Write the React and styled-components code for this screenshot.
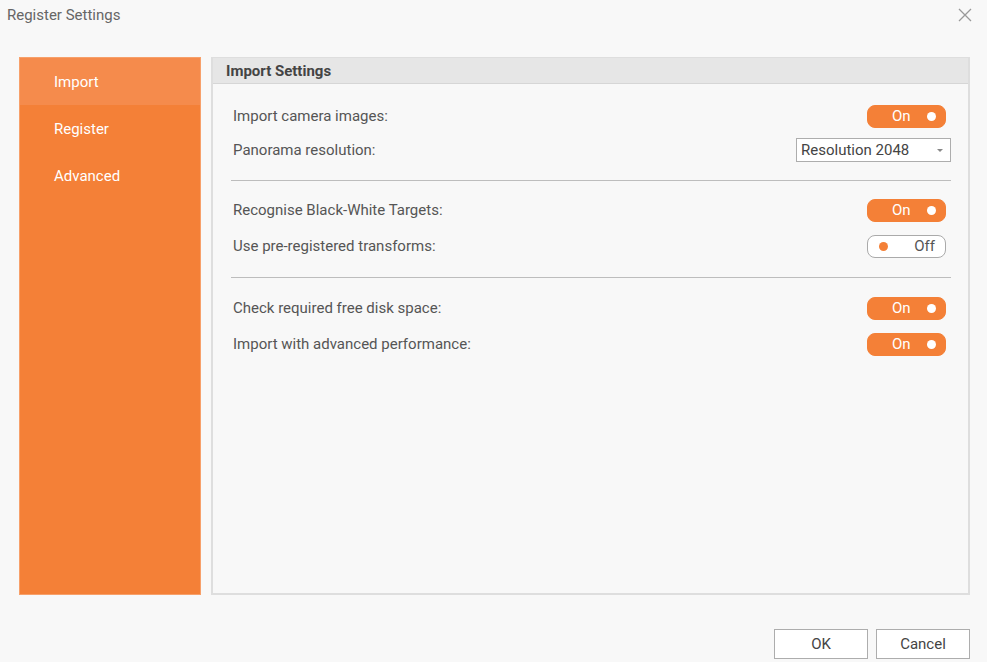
import React, { useState } from 'react';
import styled, { createGlobalStyle } from 'styled-components';

const GlobalStyle = createGlobalStyle`
  html, body {
    margin: 0;
    padding: 0;
    background: #f8f8f8;
    font-family: Roboto, "Liberation Sans", sans-serif;
  }
`;

const Dialog = styled.div`
  width: 987px;
  height: 662px;
  display: flex;
  flex-direction: column;
  background: #f8f8f8;
  box-sizing: border-box;
`;

const TitleBar = styled.div`
  height: 29px;
  display: flex;
  align-items: center;
  justify-content: space-between;
  padding: 0 14px 0 7px;
`;

const Title = styled.span`
  font-size: 15px;
  color: #666;
`;

const CloseButton = styled.button`
  border: none;
  background: none;
  padding: 0;
  width: 16px;
  height: 16px;
  display: flex;
  align-items: center;
  justify-content: center;
  cursor: pointer;
`;

const Body = styled.div`
  display: flex;
  gap: 10px;
  padding: 28px 17px 0 19px;
  height: 538px;
`;

const Sidebar = styled.nav`
  width: 182px;
  background: #f48037;
  border: 1px solid #f7a06a;
  box-sizing: border-box;
  display: flex;
  flex-direction: column;
`;

const NavItem = styled.div`
  height: 47px;
  display: flex;
  align-items: center;
  padding-left: 34px;
  color: #fff;
  font-size: 15px;
  background: ${(p) => (p.$active ? '#f58b4c' : 'transparent')};
  cursor: pointer;
`;

const Panel = styled.section`
  flex: 1;
  border: 2px solid #dedede;
  border-top-width: 1px;
  box-sizing: border-box;
  display: flex;
  flex-direction: column;
`;

const PanelHeader = styled.div`
  height: 25px;
  background: #e6e6e6;
  border-bottom: 1px solid #d6d6d6;
  display: flex;
  align-items: center;
  padding-left: 13px;
  font-size: 15px;
  font-weight: 700;
  color: #444;
`;

const PanelContent = styled.div`
  padding: 20px 17px 0 18px;
  display: flex;
  flex-direction: column;
`;

const Group = styled.div`
  display: flex;
  flex-direction: column;
  gap: ${(p) => p.$gap || 12}px;
`;

const Row = styled.div`
  height: 24px;
  display: flex;
  align-items: center;
  justify-content: space-between;
  padding-left: 2px;
`;

const Label = styled.span`
  font-size: 15px;
  color: #555;
`;

const Divider = styled.hr`
  border: none;
  border-top: 1px solid #bdbdbd;
  margin: ${(p) => p.$top}px 0 ${(p) => p.$bottom}px 0;
`;

const ToggleWrap = styled.button`
  width: 79px;
  height: 23px;
  margin-right: 5px;
  border-radius: 8px;
  box-sizing: border-box;
  border: 1px solid ${(p) => (p.$on ? '#f48037' : '#aaa')};
  background: ${(p) => (p.$on ? '#f48037' : '#fff')};
  color: ${(p) => (p.$on ? '#fff' : '#555')};
  font-family: Roboto, "Liberation Sans", sans-serif;
  font-size: 15px;
  display: flex;
  align-items: center;
  flex-direction: ${(p) => (p.$on ? 'row' : 'row-reverse')};
  justify-content: space-between;
  padding: 0 9px 0 ${(p) => (p.$on ? '24px' : '11px')};
  cursor: pointer;
`;

const Knob = styled.span`
  width: 9px;
  height: 9px;
  border-radius: 50%;
  background: ${(p) => (p.$on ? '#fff' : '#f48037')};
`;

const OffText = styled.span`
  padding-right: 1px;
`;

const Select = styled.div`
  width: 155px;
  height: 24px;
  box-sizing: border-box;
  border: 1px solid #adadad;
  background: #fff;
  display: flex;
  align-items: center;
  justify-content: space-between;
  padding: 0 7px 0 4px;
  font-size: 15px;
  color: #444;
`;

const Caret = styled.span`
  width: 0;
  height: 0;
  border-left: 3px solid transparent;
  border-right: 3px solid transparent;
  border-top: 3px solid #888;
`;

const Footer = styled.div`
  display: flex;
  justify-content: flex-end;
  gap: 8px;
  padding: 34px 17px 0 0;
`;

const Button = styled.button`
  width: 94px;
  height: 30px;
  background: #fff;
  border: 1px solid #adadad;
  font-family: Roboto, "Liberation Sans", sans-serif;
  font-size: 15px;
  color: #444;
  cursor: pointer;
`;

const Toggle = ({ on, onClick }) => (
  <ToggleWrap $on={on} onClick={onClick}>
    {on ? (
      <>
        <span>On</span>
        <Knob $on />
      </>
    ) : (
      <>
        <OffText>Off</OffText>
        <Knob />
      </>
    )}
  </ToggleWrap>
);

const navItems = ['Import', 'Register', 'Advanced'];

const App = () => {
  const [active, setActive] = useState('Import');
  const [opts, setOpts] = useState({
    camera: true,
    targets: true,
    transforms: false,
    disk: true,
    performance: true,
  });

  const flip = (key) => setOpts({ ...opts, [key]: !opts[key] });

  return (
    <Dialog>
      <GlobalStyle />
      <TitleBar>
        <Title>Register Settings</Title>
        <CloseButton type="button">
          <svg width="14" height="14" viewBox="0 0 14 14">
            <path d="M1 1 L13 13 M13 1 L1 13" stroke="#999" strokeWidth="1.3" fill="none" />
          </svg>
        </CloseButton>
      </TitleBar>
      <Body>
        <Sidebar>
          {navItems.map((item) => (
            <NavItem key={item} $active={item === active} onClick={() => setActive(item)}>
              {item}
            </NavItem>
          ))}
        </Sidebar>
        <Panel>
          <PanelHeader>Import Settings</PanelHeader>
          <PanelContent>
            <Group $gap={10}>
              <Row>
                <Label>Import camera images:</Label>
                <Toggle on={opts.camera} onClick={() => flip('camera')} />
              </Row>
              <Row>
                <Label>Panorama resolution:</Label>
                <Select>
                  <span>Resolution 2048</span>
                  <Caret />
                </Select>
              </Row>
            </Group>
            <Divider $top={18} $bottom={17} />
            <Group>
              <Row>
                <Label>Recognise Black-White Targets:</Label>
                <Toggle on={opts.targets} onClick={() => flip('targets')} />
              </Row>
              <Row>
                <Label>Use pre-registered transforms:</Label>
                <Toggle on={opts.transforms} onClick={() => flip('transforms')} />
              </Row>
            </Group>
            <Divider $top={19} $bottom={18} />
            <Group>
              <Row>
                <Label>Check required free disk space:</Label>
                <Toggle on={opts.disk} onClick={() => flip('disk')} />
              </Row>
              <Row>
                <Label>Import with advanced performance:</Label>
                <Toggle on={opts.performance} onClick={() => flip('performance')} />
              </Row>
            </Group>
          </PanelContent>
        </Panel>
      </Body>
      <Footer>
        <Button type="button">OK</Button>
        <Button type="button">Cancel</Button>
      </Footer>
    </Dialog>
  );
};

export default App;
